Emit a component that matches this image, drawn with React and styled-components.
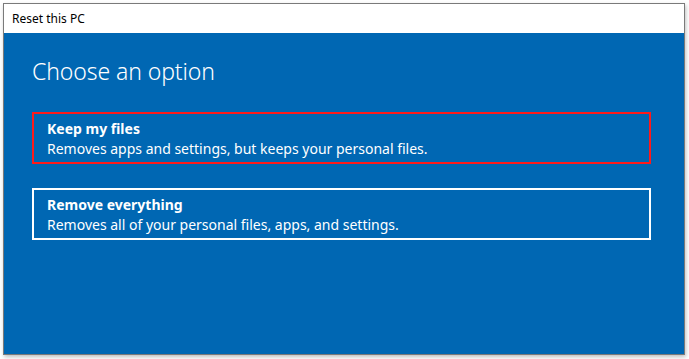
import React from "react"
import styled, { createGlobalStyle } from "styled-components"

const GlobalStyle = createGlobalStyle`
  html, body {
    margin: 0;
    padding: 0;
    background: #ffffff;
  }
  body {
    font-family: "Noto Sans", "Open Sans", sans-serif;
  }
`

const Page = styled.div`
  width: 689px;
  height: 359px;
  padding: 3px 4px 4px 3px;
  box-sizing: border-box;
`

const Window = styled.div`
  height: 352px;
  border: 1px solid #7a7a7a;
  box-shadow: 1px 2px 4px rgba(0, 0, 0, 0.25);
  display: flex;
  flex-direction: column;
  box-sizing: border-box;
`

const TitleBar = styled.div`
  height: 29px;
  background: #ffffff;
  display: flex;
  align-items: center;
  padding-left: 8px;
  font-size: 12px;
  color: #000000;
`

const Body = styled.div`
  flex: 1;
  background: #0067b3;
  padding: 22px 33px 0 28px;
  color: #ffffff;
`

const Heading = styled.h1`
  margin: 0 0 25px 0;
  font-size: 23px;
  font-weight: 300;
  line-height: 32px;
  letter-spacing: -0.1px;
`

const Options = styled.div`
  display: flex;
  flex-direction: column;
  gap: 24px;
`

const Option = styled.button`
  display: flex;
  flex-direction: column;
  align-items: flex-start;
  width: 100%;
  height: 52px;
  padding: 5px 13px 0 13px;
  box-sizing: border-box;
  background: transparent;
  border: 2px solid ${(p) => (p.$selected ? "#ff1a1a" : "#ffffff")};
  color: #ffffff;
  font-family: inherit;
  text-align: left;
  cursor: pointer;
`

const OptionTitle = styled.div`
  font-size: 14px;
  font-weight: 700;
  line-height: 20px;
`

const OptionText = styled.div`
  font-size: 14px;
  line-height: 20px;
`

const options = [
  {
    title: "Keep my files",
    text: "Removes apps and settings, but keeps your personal files.",
    selected: true,
  },
  {
    title: "Remove everything",
    text: "Removes all of your personal files, apps, and settings.",
  },
]

export default function App() {
  return (
    <>
      <GlobalStyle />
      <Page>
        <Window>
          <TitleBar>Reset this PC</TitleBar>
          <Body>
            <Heading>Choose an option</Heading>
            <Options>
              {options.map((o) => (
                <Option key={o.title} $selected={o.selected}>
                  <OptionTitle>{o.title}</OptionTitle>
                  <OptionText>{o.text}</OptionText>
                </Option>
              ))}
            </Options>
          </Body>
        </Window>
      </Page>
    </>
  )
}
